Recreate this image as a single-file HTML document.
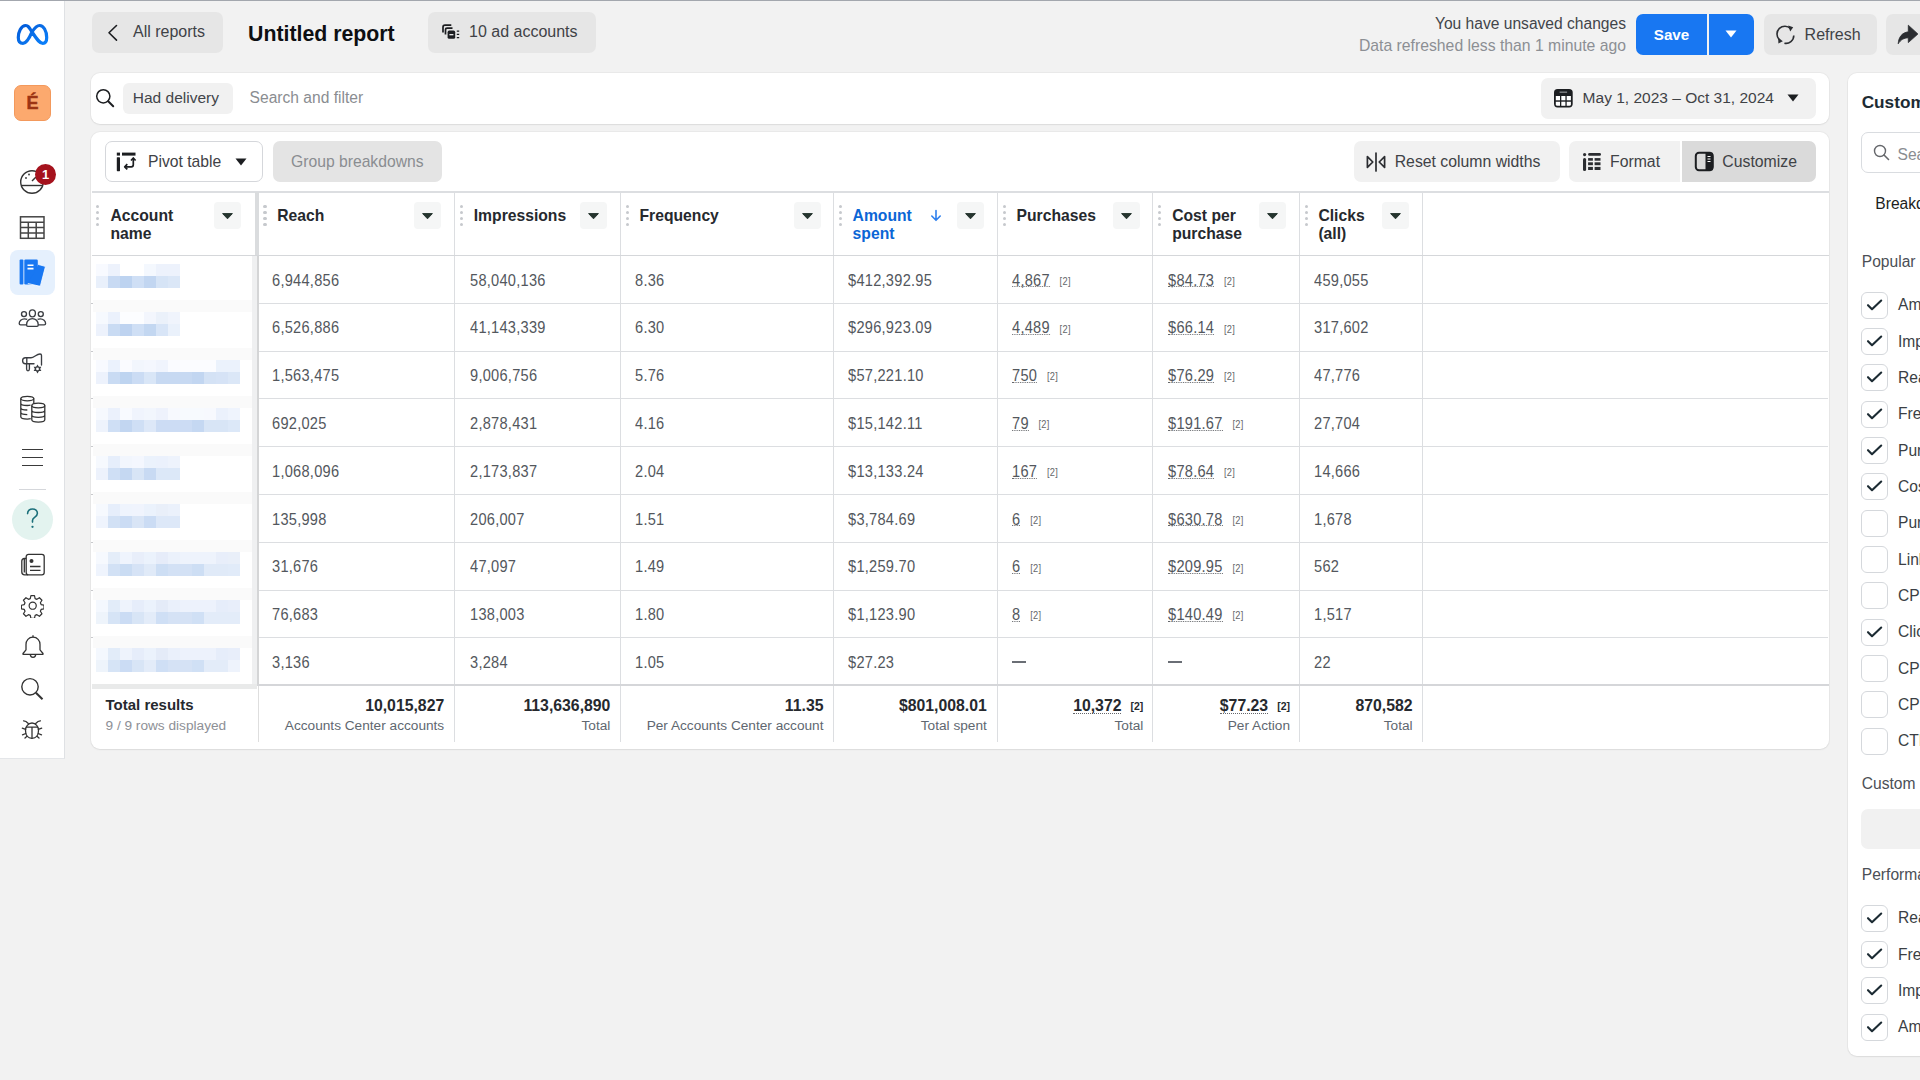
<!DOCTYPE html>
<html><head><meta charset="utf-8"><title>Untitled report</title>
<style>
html,body{margin:0;padding:0;}
body{width:1920px;height:1080px;overflow:hidden;position:relative;background:#f2f2f2;font-family:"Liberation Sans", sans-serif;}
.t{position:absolute;white-space:nowrap;line-height:1;}
.r{position:absolute;box-sizing:border-box;}
</style></head><body>
<div class="r" style="left:0px;top:0px;width:1920px;height:1px;background:#a3a7ae"></div>
<div class="r" style="left:0px;top:1px;width:65px;height:758px;background:#fff;border-right:1px solid #dfe1e4;border-bottom:1px solid #e4e6e9"></div>
<svg class="r" style="left:10px;top:15px;" width="46" height="40" viewBox="10 15 46 40" fill="none"><defs><linearGradient id="mg" x1="0" y1="0" x2="1" y2="1"><stop offset="0" stop-color="#0059d9"/><stop offset="0.5" stop-color="#0a6fe8"/><stop offset="1" stop-color="#0a80fb"/></linearGradient></defs>
<path d="M32 32C29 27 28 25.5 25.8 25.5 21 25.5 18.3 32 18.3 37.5 18.3 41.5 20.3 43.4 23 43.4 26 43.4 28.5 40 32 32 35.5 26.5 37.5 25.5 39.6 25.5 43.5 25.5 46.7 31 46.7 37.5 46.7 41.3 45 43.4 42.8 43.4 40 43.4 38 41 32 32z" stroke="url(#mg)" stroke-width="3.2" stroke-linejoin="round"/></svg>
<div class="r" style="left:14px;top:85px;width:37px;height:36px;background:#fca96e;border:1px solid #f3995c;border-radius:7px"></div>
<div class="t" style="left:14px;width:37px;text-align:center;top:93.6px;font-size:18px;font-weight:700;color:#9c3513;-webkit-text-stroke:0.5px #9c3513">É</div>
<svg class="r" style="left:19px;top:168px;" width="28" height="28" viewBox="0 0 28 28" fill="none"><circle cx="13" cy="14" r="11.3" stroke="#333" stroke-width="1.4"/>
<path d="M2.2 17.5h21.6" stroke="#333" stroke-width="1.4"/>
<circle cx="7" cy="10" r="0.9" fill="#333"/><circle cx="10" cy="6.5" r="0.9" fill="#333"/><path d="M13 13l4-4" stroke="#333" stroke-width="1.4"/></svg>
<div class="r" style="left:35px;top:164px;width:21px;height:21px;background:#a5121d;border-radius:50%;border:0"></div>
<div class="t" style="left:35px;width:21px;text-align:center;top:167.5px;font-size:13px;font-weight:700;color:#fff">1</div>
<svg class="r" style="left:19px;top:215px;" width="27" height="26" viewBox="0 0 27 26" fill="none"><rect x="1.5" y="1.8" width="23.5" height="21.5" stroke="#444" stroke-width="1.5"/>
<path d="M1.5 7.2h23.5M1.5 12.6h23.5M1.5 18h23.5M9.3 7.2v16M17.2 7.2v16" stroke="#444" stroke-width="1.5"/></svg>
<div class="r" style="left:10px;top:250px;width:45px;height:45px;background:#e5f0fd;border-radius:8px"></div>
<svg class="r" style="left:17px;top:257px;" width="32" height="32" viewBox="0 0 32 32" fill="none"><rect x="2.6" y="2.5" width="3.8" height="25" rx="1" fill="#1877f2"/>
<rect x="7.3" y="2.5" width="13.5" height="25" rx="1.2" fill="#1877f2"/>
<path d="M21.5 7.5l5.8 1.6c.7.2 1 .8.9 1.5l-4.6 17.6c-.2.7-.8 1-1.5.9L10.8 26.5" fill="#1877f2" stroke="#fff" stroke-width="0.8"/>
<path d="M10.5 8.2h6M10.5 11.6h6" stroke="#fff" stroke-width="1.6"/></svg>
<svg class="r" style="left:16px;top:300px;" width="34" height="80" viewBox="16 300 34 80" fill="none"><g stroke="#3a3d42" stroke-width="1.35" stroke-linejoin="round">
<circle cx="24" cy="314.1" r="2.5"/><ellipse cx="32.4" cy="313.3" rx="3" ry="3.5"/><circle cx="40.8" cy="314.1" r="2.5"/>
<path d="M27.2 319.4c-.8-.4-1.7-.6-2.7-.6-3 0-5.3 2.2-5.3 4.6 0 .8.6 1.4 1.4 1.4h6.2"/>
<path d="M37.6 319.4c.8-.4 1.7-.6 2.7-.6 3 0 5.3 2.2 5.3 4.6 0 .8-.6 1.4-1.4 1.4h-6.2"/>
<path d="M32.4 318.6c-3.3 0-5.8 2.6-5.8 5.9v.6c0 .7.6 1.2 1.2 1.2h9.2c.7 0 1.2-.5 1.2-1.2v-.6c0-3.3-2.5-5.9-5.8-5.9z" fill="#fff"/></g></svg>
<svg class="r" style="left:16px;top:340px;" width="34" height="40" viewBox="16 340 34 40" fill="none"><g stroke="#3a3d42" stroke-width="1.35" stroke-linejoin="round" stroke-linecap="round">
<path d="M25.5 357.7C23.6 357.7 22.6 359 22.6 360.7S23.6 363.7 25.5 363.7H34M25.5 357.7H31C34 357.7 36.5 354 40 354 41 354 41.5 354.7 41.5 355.6V365"/>
<path d="M26.8 357.7V363.7M26.6 363.7V369C26.6 370.3 27.3 370.8 28 370.8S29.4 370.3 29.4 369V363.7"/></g>
<path d="M37.5 364.4L41.4 371.1H33.6z" fill="#3a3d42"/><path d="M37.5 373.4L41.4 366.7H33.6z" fill="#3a3d42"/><circle cx="37.5" cy="368.9" r="1.4" fill="#fff"/></svg>
<svg class="r" style="left:19px;top:395px;" width="28" height="28" viewBox="0 0 28 28" fill="none"><g stroke="#333" stroke-width="1.3"><ellipse cx="8.3" cy="3.6" rx="6.5" ry="2.3"/>
<path d="M1.8 3.6v18.2c0 1.3 2.9 2.3 6.5 2.3 1.3 0 2.5-.1 3.4-.4M14.8 3.6v5.6M1.8 8.2c0 1.3 2.9 2.3 6.5 2.3 1.2 0 2.3-.1 3.2-.3M1.8 12.7c0 1.3 2.9 2.3 6.5 2.3M1.8 17.3c0 1.3 2.9 2.3 6.5 2.3"/>
<ellipse cx="19.3" cy="10.5" rx="6.5" ry="2.3" fill="#fff"/>
<path d="M12.8 10.5v14.3c0 1.3 2.9 2.3 6.5 2.3s6.5-1 6.5-2.3V10.5M12.8 15.2c0 1.3 2.9 2.3 6.5 2.3s6.5-1 6.5-2.3M12.8 20c0 1.3 2.9 2.3 6.5 2.3s6.5-1 6.5-2.3"/></g></svg>
<div class="r" style="left:22px;top:449px;width:21px;height:1.3px;background:#3a3a3a"></div>
<div class="r" style="left:22px;top:457px;width:21px;height:1.3px;background:#3a3a3a"></div>
<div class="r" style="left:22px;top:465px;width:21px;height:1.3px;background:#3a3a3a"></div>
<div class="r" style="left:19px;top:489px;width:27px;height:1px;background:#d5d7db"></div>
<div class="r" style="left:12px;top:499px;width:41px;height:41px;background:#e3f3ef;border-radius:50%"></div>
<svg class="r" style="left:20px;top:505px;" width="25" height="28" viewBox="0 0 25 28" fill="none"><path d="M7.6 8.6c0-2.9 2.2-4.6 4.9-4.6 2.8 0 4.9 1.8 4.9 4.3 0 2.2-1.4 3.2-2.8 4.1-1.3.8-2.1 1.5-2.1 3.1v1.6" stroke="#1b6f7a" stroke-width="1.6" stroke-linecap="round"/><circle cx="12.5" cy="21.8" r="1.15" fill="#1b6f7a"/></svg>
<svg class="r" style="left:20px;top:552px;" width="26" height="25" viewBox="0 0 26 25" fill="none"><g stroke="#333" stroke-width="1.3" stroke-linejoin="round"><rect x="6.2" y="2.3" width="18" height="20.5" rx="2.3"/>
<path d="M6.2 6.5H4.3c-1.5 0-2.5 1-2.5 2.5v11c0 1.6 1.2 2.8 2.8 2.8h3.5M4.3 6.5v14"/>
<path d="M10 14.5h10.5M10 18.3h10.5"/></g><circle cx="11.5" cy="9" r="2" fill="#333"/></svg>
<svg class="r" style="left:20.8px;top:594.3px;" width="23.4" height="23.4" viewBox="0 0 25 25" fill="none"><path d="M10.6 1.8h3.8l.7 3.1 1.9.8 2.7-1.7 2.7 2.7-1.7 2.7.8 1.9 3.1.7v3.8l-3.1.7-.8 1.9 1.7 2.7-2.7 2.7-2.7-1.7-1.9.8-.7 3.1h-3.8l-.7-3.1-1.9-.8-2.7 1.7-2.7-2.7 1.7-2.7-.8-1.9-3.1-.7v-3.8l3.1-.7.8-1.9-1.7-2.7 2.7-2.7 2.7 1.7 1.9-.8z" stroke="#333" stroke-width="1.3" stroke-linejoin="round"/>
<circle cx="12.5" cy="12.5" r="3.8" stroke="#333" stroke-width="1.3"/></svg>
<svg class="r" style="left:21px;top:634px;" width="24" height="26" viewBox="0 0 24 26" fill="none"><path d="M12 3.2c-4.3 0-7 3.3-7 7.3v5.3L2 19.5v.8h20v-.8l-3-3.7v-5.3c0-4-2.7-7.3-7-7.3z" stroke="#333" stroke-width="1.3" stroke-linejoin="round"/>
<path d="M12 1.3v1.9M9.3 20.3c0 1.7 1.2 3 2.7 3s2.7-1.3 2.7-3" stroke="#333" stroke-width="1.3"/></svg>
<svg class="r" style="left:20px;top:677px;" width="25" height="24" viewBox="0 0 25 24" fill="none"><circle cx="10" cy="9.8" r="8.2" stroke="#333" stroke-width="1.4"/><path d="M15.9 15.7l6.6 6.6" stroke="#333" stroke-width="2"/></svg>
<svg class="r" style="left:20px;top:716px;" width="24" height="24" viewBox="0 0 24 24" fill="none"><g stroke="#333" stroke-width="1.3" stroke-linecap="round"><path d="M12 22.3c-4.2 0-6.5-3.3-6.5-7.8 0-3.8 2.6-7.5 6.5-7.5s6.5 3.7 6.5 7.5c0 4.5-2.3 7.8-6.5 7.8z"/>
<path d="M6.2 11.2h11.6M12 11.2v11M8.3 7.6L6 5.5 3.6 4.8M15.7 7.6L18 5.5l2.4-.7M5.6 13.3L2.3 12.1M18.4 13.3l3.3-1.2M5.8 17.5l-3.3 1.3M18.2 17.5l3.3 1.3M7 20.3L5 22M17 20.3l2 1.7"/></g></svg>
<div class="r" style="left:92px;top:12px;width:131px;height:41px;background:#e6e6e6;border-radius:7px"></div>
<svg class="r" style="left:106px;top:24px;" width="14" height="18" viewBox="0 0 14 18" fill="none"><path d="M10.5 1.5L3 8.8l7.5 7.3" stroke="#1c1e21" stroke-width="1.6" stroke-linecap="round" stroke-linejoin="round"/></svg>
<div class="t" style="left:133.00px;top:23.90px;font-size:16px;font-weight:400;color:#3f4246;">All reports</div>
<div class="t" style="left:248.00px;top:23.34px;font-size:22.3px;font-weight:700;color:#0d0f12;transform:scaleX(0.955);transform-origin:0 0">Untitled report</div>
<div class="r" style="left:428px;top:12px;width:168px;height:41px;background:#e6e6e6;border-radius:7px"></div>
<svg class="r" style="left:440px;top:23px;" width="22" height="18" viewBox="0 0 22 18" fill="none"><path d="M3 9.5V4.2C3 3 3.9 2.2 5 2.2h6.3" stroke="#1c1e21" stroke-width="1.7"/>
<path d="M5.5 11.5V6.8c0-.9.7-1.6 1.6-1.6h5.4" stroke="#1c1e21" stroke-width="1.7"/>
<rect x="7.6" y="7.6" width="7.6" height="8.2" rx="1.6" fill="#1c1e21"/><path d="M9.4 11.7h4" stroke="#fff" stroke-width="1.2"/>
<path d="M16.8 8.2h2.4M16.8 11.4h2.4M16.8 14.6h2.4" stroke="#1c1e21" stroke-width="1.3"/></svg>
<div class="t" style="left:469.00px;top:23.90px;font-size:16px;font-weight:400;color:#3f4246;">10 ad accounts</div>
<div class="t" style="right:294.00px;top:15.54px;font-size:15.6px;font-weight:400;color:#42454a;">You have unsaved changes</div>
<div class="t" style="right:294.00px;top:38.11px;font-size:15.75px;font-weight:400;color:#8c8f94;">Data refreshed less than 1 minute ago</div>
<div class="r" style="left:1636px;top:14px;width:71px;height:41px;background:#1877f2;border-radius:7px 0 0 7px"></div>
<div class="t" style="left:1671.50px;top:27.38px;font-size:15.2px;font-weight:700;color:#fff;transform:translateX(-50%)">Save</div>
<div class="r" style="left:1709px;top:14px;width:45px;height:41px;background:#1877f2;border-radius:0 7px 7px 0"></div>
<svg class="r" style="left:1724px;top:29px;" width="14" height="10" viewBox="0 0 14 10" fill="none"><path d="M1.5 1.5h11L7 8.5z" fill="#fff"/></svg>
<div class="r" style="left:1764px;top:14px;width:113px;height:41px;background:#e6e6e6;border-radius:7px"></div>
<svg class="r" style="left:1775px;top:24px;" width="22" height="22" viewBox="0 0 22 22" fill="none"><path d="M15.6 4.6A7.8 7.8 0 0 0 4.2 15.6" stroke="#2b2d31" stroke-width="1.6" fill="none"/><path d="M18.8 11.6A7.8 7.8 0 0 1 9.4 19.2" stroke="#2b2d31" stroke-width="1.6" fill="none"/>
<path d="M13.2 1.6l5 1.6-3 4.4z" fill="#2b2d31"/><path d="M3.2 13.6l4.6 3.6-4.4 2.4z" fill="#2b2d31"/></svg>
<div class="t" style="left:1804.60px;top:27.20px;font-size:16px;font-weight:400;color:#3f4246;">Refresh</div>
<div class="r" style="left:1886px;top:14px;width:60px;height:41px;background:#e6e6e6;border-radius:7px"></div>
<svg class="r" style="left:1896px;top:24px;" width="24" height="22" viewBox="0 0 24 22" fill="none"><path d="M12.3 1.2l9.6 8.8-9.6 8.6v-4.8c-4.4.2-7.5 1.9-10.1 6 .4-6.8 3.9-11.2 10.1-12z" fill="#2b2d31" stroke="#2b2d31" stroke-width="0.8" stroke-linejoin="round"/></svg>
<div class="r" style="left:91px;top:73px;width:1738px;height:51px;background:#fff;border-radius:9px;box-shadow:0 0 0 1px rgba(0,0,0,0.035),0 1px 2px rgba(0,0,0,0.06)"></div>
<svg class="r" style="left:95px;top:88px;" width="20" height="20" viewBox="0 0 20 20" fill="none"><circle cx="8.3" cy="8.3" r="6.6" stroke="#1c1e21" stroke-width="1.5"/><path d="M13.2 13.2l5 5" stroke="#1c1e21" stroke-width="2" stroke-linecap="round"/></svg>
<div class="r" style="left:123px;top:83px;width:110px;height:31px;background:#f1f1f1;border-radius:6px"></div>
<div class="t" style="left:132.80px;top:90.42px;font-size:15.5px;font-weight:400;color:#42454a;">Had delivery</div>
<div class="t" style="left:249.60px;top:90.34px;font-size:15.6px;font-weight:400;color:#8a8d91;">Search and filter</div>
<div class="r" style="left:1541px;top:78px;width:275px;height:41px;background:#f1f1f1;border-radius:7px"></div>
<svg class="r" style="left:1554.3px;top:88.9px;" width="19" height="19" viewBox="0 0 19 19" fill="none"><rect x="0" y="0" width="18.7" height="18.4" rx="3.6" fill="#1c1e21"/><rect x="5.6" y="2.6" width="7.5" height="1.1" fill="#9a9ca0"/>
<g fill="#fff"><rect x="1.8" y="7" width="4.2" height="4.3"/><rect x="7.3" y="7" width="4.1" height="4.3"/><rect x="12.7" y="7" width="4.2" height="4.3"/>
<path d="M1.8 12.7H6v4.1H3.3a1.5 1.5 0 0 1-1.5-1.5z"/><rect x="7.3" y="12.7" width="4.1" height="4.1"/><path d="M12.7 12.7h4.2v2.6a1.5 1.5 0 0 1-1.5 1.5h-2.7z"/></g></svg>
<div class="t" style="left:1582.60px;top:90.42px;font-size:15.5px;font-weight:400;color:#3f4246;">May 1, 2023 – Oct 31, 2024</div>
<svg class="r" style="left:1786px;top:93px;" width="14" height="10" viewBox="0 0 14 10" fill="none"><path d="M1.5 1.5h11L7 8.5z" fill="#1c1e21"/></svg>
<div class="r" style="left:91px;top:132px;width:1738px;height:617px;background:#fff;border-radius:9px;box-shadow:0 0 0 1px rgba(0,0,0,0.035),0 1px 2px rgba(0,0,0,0.06)"></div>
<div class="r" style="left:105px;top:141px;width:158px;height:41px;background:#fff;border:1px solid #d5d7db;border-radius:7px"></div>
<svg class="r" style="left:115px;top:151px;" width="22" height="22" viewBox="0 0 22 22" fill="none"><rect x="1.8" y="6.2" width="3.2" height="14" rx=".6" fill="#1c1e21"/><rect x="1.8" y="1.6" width="3.2" height="3" fill="#1c1e21"/>
<rect x="7" y="1.6" width="13.5" height="3" fill="#1c1e21"/>
<path d="M18.3 7.5v6.3c0 1.2-.8 2-2 2H10" stroke="#1c1e21" stroke-width="1.7"/><path d="M16 9.5l2.3-2.5 2.3 2.5M12.3 13.2l-2.6 2.6 2.6 2.6" stroke="#1c1e21" stroke-width="1.7" stroke-linejoin="round"/></svg>
<div class="t" style="left:148.00px;top:154.46px;font-size:15.7px;font-weight:400;color:#3f4246;">Pivot table</div>
<svg class="r" style="left:234px;top:157px;" width="14" height="10" viewBox="0 0 14 10" fill="none"><path d="M1.5 1.5h11L7 8.5z" fill="#1c1e21"/></svg>
<div class="r" style="left:273px;top:141px;width:169px;height:41px;background:#e4e4e4;border-radius:7px"></div>
<div class="t" style="left:291.00px;top:154.46px;font-size:15.7px;font-weight:400;color:#8a8d91;">Group breakdowns</div>
<div class="r" style="left:1354px;top:141px;width:206px;height:41px;background:#f1f1f1;border-radius:7px"></div>
<svg class="r" style="left:1365px;top:152px;" width="22" height="20" viewBox="0 0 22 20" fill="none"><path d="M2.4 4.6l5.4 5.4-5.4 5.4z" stroke="#2b2d31" stroke-width="1.7" stroke-linejoin="round"/><path d="M19.6 4.6l-5.4 5.4 5.4 5.4z" stroke="#2b2d31" stroke-width="1.7" stroke-linejoin="round"/><path d="M11 1v18" stroke="#2b2d31" stroke-width="1.7" stroke-linecap="round"/></svg>
<div class="t" style="left:1394.70px;top:154.37px;font-size:15.8px;font-weight:400;color:#3f4246;">Reset column widths</div>
<div class="r" style="left:1569px;top:141px;width:111px;height:41px;background:#f1f1f1;border-radius:7px 0 0 7px"></div>
<svg class="r" style="left:1582.8px;top:152.8px;" width="18" height="18" viewBox="0 0 18 18" fill="none"><g fill="#2b2d31"><circle cx="1.6" cy="1.6" r="1.6"/><rect x="5.1" y="0" width="12.9" height="2.8" rx="1.4"/><rect x="0" y="5.1" width="3.1" height="12.9" rx="1.5"/>
<rect x="5.1" y="5.1" width="4.8" height="2.6"/><rect x="11.6" y="5.1" width="5.9" height="2.6"/><rect x="5.1" y="9.3" width="4.8" height="2.9"/><rect x="11.6" y="9.3" width="5.9" height="2.9"/><rect x="5.1" y="13.9" width="4.8" height="3.1"/><rect x="11.6" y="13.9" width="5.9" height="3.1"/></g></svg>
<div class="t" style="left:1610.00px;top:154.37px;font-size:15.8px;font-weight:400;color:#3f4246;">Format</div>
<div class="r" style="left:1682px;top:141px;width:134px;height:41px;background:#dadada;border-radius:0 7px 7px 0"></div>
<svg class="r" style="left:1694px;top:151px;" width="21" height="21" viewBox="0 0 21 21" fill="none"><rect x="1.8" y="1.8" width="17" height="17.4" rx="3.2" stroke="#1c1e21" stroke-width="2"/><rect x="11.5" y="1.8" width="7.3" height="17.4" fill="#1c1e21"/><path d="M13.5 5.5h3M13.5 8h3M13.5 10.5h3" stroke="#fff" stroke-width="1"/></svg>
<div class="t" style="left:1722.30px;top:154.37px;font-size:15.8px;font-weight:400;color:#3f4246;">Customize</div>
<div class="r" style="left:92px;top:191px;width:1737px;height:2px;background:#dcdee1"></div>
<div class="r" style="left:255px;top:192px;width:4px;height:64px;background:#dadcde"></div>
<div class="r" style="left:252px;top:256px;width:5px;height:429px;background:#eff0f1"></div>
<div class="r" style="left:257px;top:256px;width:2px;height:429px;background:#d4d5d6"></div>
<div class="r" style="left:454px;top:192px;width:1px;height:550px;background:#dcdee1"></div>
<div class="r" style="left:620px;top:192px;width:1px;height:550px;background:#dcdee1"></div>
<div class="r" style="left:833px;top:192px;width:1px;height:550px;background:#dcdee1"></div>
<div class="r" style="left:997px;top:192px;width:1px;height:550px;background:#dcdee1"></div>
<div class="r" style="left:1152px;top:192px;width:1px;height:550px;background:#dcdee1"></div>
<div class="r" style="left:1299px;top:192px;width:1px;height:550px;background:#dcdee1"></div>
<div class="r" style="left:1422px;top:192px;width:1px;height:550px;background:#dcdee1"></div>
<div class="r" style="left:258px;top:686px;width:1px;height:56px;background:#dedede"></div>
<div class="r" style="left:92px;top:255px;width:1737px;height:1px;background:#d5d7da"></div>
<div class="r" style="left:259px;top:302.8px;width:1569px;height:1px;background:#dcdee1"></div>
<div class="r" style="left:91px;top:302.8px;width:2px;height:1px;background:#c8c9cc"></div>
<div class="r" style="left:259px;top:350.6px;width:1569px;height:1px;background:#dcdee1"></div>
<div class="r" style="left:91px;top:350.6px;width:2px;height:1px;background:#c8c9cc"></div>
<div class="r" style="left:259px;top:398.4px;width:1569px;height:1px;background:#dcdee1"></div>
<div class="r" style="left:91px;top:398.4px;width:2px;height:1px;background:#c8c9cc"></div>
<div class="r" style="left:259px;top:446.2px;width:1569px;height:1px;background:#dcdee1"></div>
<div class="r" style="left:91px;top:446.2px;width:2px;height:1px;background:#c8c9cc"></div>
<div class="r" style="left:259px;top:494.0px;width:1569px;height:1px;background:#dcdee1"></div>
<div class="r" style="left:91px;top:494.0px;width:2px;height:1px;background:#c8c9cc"></div>
<div class="r" style="left:259px;top:541.8px;width:1569px;height:1px;background:#dcdee1"></div>
<div class="r" style="left:91px;top:541.8px;width:2px;height:1px;background:#c8c9cc"></div>
<div class="r" style="left:259px;top:589.6px;width:1569px;height:1px;background:#dcdee1"></div>
<div class="r" style="left:91px;top:589.6px;width:2px;height:1px;background:#c8c9cc"></div>
<div class="r" style="left:259px;top:637.4px;width:1569px;height:1px;background:#dcdee1"></div>
<div class="r" style="left:91px;top:637.4px;width:2px;height:1px;background:#c8c9cc"></div>
<div class="r" style="left:257px;top:684px;width:1572px;height:2px;background:#d5d6d9"></div>
<div class="r" style="left:96.2px;top:205.2px;width:3.2px;height:3.2px;background:#c6c9cd;border-radius:50%"></div>
<div class="r" style="left:96.2px;top:211.2px;width:3.2px;height:3.2px;background:#c6c9cd;border-radius:50%"></div>
<div class="r" style="left:96.2px;top:217.2px;width:3.2px;height:3.2px;background:#c6c9cd;border-radius:50%"></div>
<div class="r" style="left:96.2px;top:223.2px;width:3.2px;height:3.2px;background:#c6c9cd;border-radius:50%"></div>
<div class="t" style="left:110.50px;top:208.26px;font-size:15.7px;font-weight:700;color:#26292e;">Account</div>
<div class="t" style="left:110.50px;top:225.96px;font-size:15.7px;font-weight:700;color:#26292e;">name</div>
<div class="r" style="left:214px;top:201.5px;width:27px;height:27px;background:#f5f6f6;border-radius:4px"></div>
<svg class="r" style="left:221px;top:211.5px;" width="13" height="9" viewBox="0 0 13 9" fill="none"><path d="M1.6 1.6h9.8L6.5 6.8z" fill="#26352f" stroke="#26352f" stroke-width="1" stroke-linejoin="round"/></svg>
<div class="r" style="left:263.4px;top:205.2px;width:3.2px;height:3.2px;background:#c6c9cd;border-radius:50%"></div>
<div class="r" style="left:263.4px;top:211.2px;width:3.2px;height:3.2px;background:#c6c9cd;border-radius:50%"></div>
<div class="r" style="left:263.4px;top:217.2px;width:3.2px;height:3.2px;background:#c6c9cd;border-radius:50%"></div>
<div class="r" style="left:263.4px;top:223.2px;width:3.2px;height:3.2px;background:#c6c9cd;border-radius:50%"></div>
<div class="t" style="left:277.20px;top:208.26px;font-size:15.7px;font-weight:700;color:#26292e;">Reach</div>
<div class="r" style="left:414.2px;top:201.5px;width:27px;height:27px;background:#f5f6f6;border-radius:4px"></div>
<svg class="r" style="left:421.2px;top:211.5px;" width="13" height="9" viewBox="0 0 13 9" fill="none"><path d="M1.6 1.6h9.8L6.5 6.8z" fill="#26352f" stroke="#26352f" stroke-width="1" stroke-linejoin="round"/></svg>
<div class="r" style="left:459.7px;top:205.2px;width:3.2px;height:3.2px;background:#c6c9cd;border-radius:50%"></div>
<div class="r" style="left:459.7px;top:211.2px;width:3.2px;height:3.2px;background:#c6c9cd;border-radius:50%"></div>
<div class="r" style="left:459.7px;top:217.2px;width:3.2px;height:3.2px;background:#c6c9cd;border-radius:50%"></div>
<div class="r" style="left:459.7px;top:223.2px;width:3.2px;height:3.2px;background:#c6c9cd;border-radius:50%"></div>
<div class="t" style="left:473.75px;top:208.26px;font-size:15.7px;font-weight:700;color:#26292e;">Impressions</div>
<div class="r" style="left:580px;top:201.5px;width:27px;height:27px;background:#f5f6f6;border-radius:4px"></div>
<svg class="r" style="left:587px;top:211.5px;" width="13" height="9" viewBox="0 0 13 9" fill="none"><path d="M1.6 1.6h9.8L6.5 6.8z" fill="#26352f" stroke="#26352f" stroke-width="1" stroke-linejoin="round"/></svg>
<div class="r" style="left:625.7px;top:205.2px;width:3.2px;height:3.2px;background:#c6c9cd;border-radius:50%"></div>
<div class="r" style="left:625.7px;top:211.2px;width:3.2px;height:3.2px;background:#c6c9cd;border-radius:50%"></div>
<div class="r" style="left:625.7px;top:217.2px;width:3.2px;height:3.2px;background:#c6c9cd;border-radius:50%"></div>
<div class="r" style="left:625.7px;top:223.2px;width:3.2px;height:3.2px;background:#c6c9cd;border-radius:50%"></div>
<div class="t" style="left:639.50px;top:208.26px;font-size:15.7px;font-weight:700;color:#26292e;">Frequency</div>
<div class="r" style="left:793.5px;top:201.5px;width:27px;height:27px;background:#f5f6f6;border-radius:4px"></div>
<svg class="r" style="left:800.5px;top:211.5px;" width="13" height="9" viewBox="0 0 13 9" fill="none"><path d="M1.6 1.6h9.8L6.5 6.8z" fill="#26352f" stroke="#26352f" stroke-width="1" stroke-linejoin="round"/></svg>
<div class="r" style="left:839.1px;top:205.2px;width:3.2px;height:3.2px;background:#c6c9cd;border-radius:50%"></div>
<div class="r" style="left:839.1px;top:211.2px;width:3.2px;height:3.2px;background:#c6c9cd;border-radius:50%"></div>
<div class="r" style="left:839.1px;top:217.2px;width:3.2px;height:3.2px;background:#c6c9cd;border-radius:50%"></div>
<div class="r" style="left:839.1px;top:223.2px;width:3.2px;height:3.2px;background:#c6c9cd;border-radius:50%"></div>
<div class="t" style="left:852.60px;top:208.26px;font-size:15.7px;font-weight:700;color:#0b66d6;">Amount</div>
<div class="t" style="left:852.60px;top:225.96px;font-size:15.7px;font-weight:700;color:#0b66d6;">spent</div>
<div class="r" style="left:956.7px;top:201.5px;width:27px;height:27px;background:#f5f6f6;border-radius:4px"></div>
<svg class="r" style="left:963.7px;top:211.5px;" width="13" height="9" viewBox="0 0 13 9" fill="none"><path d="M1.6 1.6h9.8L6.5 6.8z" fill="#26352f" stroke="#26352f" stroke-width="1" stroke-linejoin="round"/></svg>
<div class="r" style="left:1002.7px;top:205.2px;width:3.2px;height:3.2px;background:#c6c9cd;border-radius:50%"></div>
<div class="r" style="left:1002.7px;top:211.2px;width:3.2px;height:3.2px;background:#c6c9cd;border-radius:50%"></div>
<div class="r" style="left:1002.7px;top:217.2px;width:3.2px;height:3.2px;background:#c6c9cd;border-radius:50%"></div>
<div class="r" style="left:1002.7px;top:223.2px;width:3.2px;height:3.2px;background:#c6c9cd;border-radius:50%"></div>
<div class="t" style="left:1016.50px;top:208.26px;font-size:15.7px;font-weight:700;color:#26292e;">Purchases</div>
<div class="r" style="left:1112.7px;top:201.5px;width:27px;height:27px;background:#f5f6f6;border-radius:4px"></div>
<svg class="r" style="left:1119.7px;top:211.5px;" width="13" height="9" viewBox="0 0 13 9" fill="none"><path d="M1.6 1.6h9.8L6.5 6.8z" fill="#26352f" stroke="#26352f" stroke-width="1" stroke-linejoin="round"/></svg>
<div class="r" style="left:1158.0px;top:205.2px;width:3.2px;height:3.2px;background:#c6c9cd;border-radius:50%"></div>
<div class="r" style="left:1158.0px;top:211.2px;width:3.2px;height:3.2px;background:#c6c9cd;border-radius:50%"></div>
<div class="r" style="left:1158.0px;top:217.2px;width:3.2px;height:3.2px;background:#c6c9cd;border-radius:50%"></div>
<div class="r" style="left:1158.0px;top:223.2px;width:3.2px;height:3.2px;background:#c6c9cd;border-radius:50%"></div>
<div class="t" style="left:1172.20px;top:208.26px;font-size:15.7px;font-weight:700;color:#26292e;">Cost per</div>
<div class="t" style="left:1172.20px;top:225.96px;font-size:15.7px;font-weight:700;color:#26292e;">purchase</div>
<div class="r" style="left:1259.3px;top:201.5px;width:27px;height:27px;background:#f5f6f6;border-radius:4px"></div>
<svg class="r" style="left:1266.3px;top:211.5px;" width="13" height="9" viewBox="0 0 13 9" fill="none"><path d="M1.6 1.6h9.8L6.5 6.8z" fill="#26352f" stroke="#26352f" stroke-width="1" stroke-linejoin="round"/></svg>
<div class="r" style="left:1304.6px;top:205.2px;width:3.2px;height:3.2px;background:#c6c9cd;border-radius:50%"></div>
<div class="r" style="left:1304.6px;top:211.2px;width:3.2px;height:3.2px;background:#c6c9cd;border-radius:50%"></div>
<div class="r" style="left:1304.6px;top:217.2px;width:3.2px;height:3.2px;background:#c6c9cd;border-radius:50%"></div>
<div class="r" style="left:1304.6px;top:223.2px;width:3.2px;height:3.2px;background:#c6c9cd;border-radius:50%"></div>
<div class="t" style="left:1318.40px;top:208.26px;font-size:15.7px;font-weight:700;color:#26292e;">Clicks</div>
<div class="t" style="left:1318.40px;top:225.96px;font-size:15.7px;font-weight:700;color:#26292e;">(all)</div>
<div class="r" style="left:1381.8px;top:201.5px;width:27px;height:27px;background:#f5f6f6;border-radius:4px"></div>
<svg class="r" style="left:1388.8px;top:211.5px;" width="13" height="9" viewBox="0 0 13 9" fill="none"><path d="M1.6 1.6h9.8L6.5 6.8z" fill="#26352f" stroke="#26352f" stroke-width="1" stroke-linejoin="round"/></svg>
<svg class="r" style="left:929px;top:207px;" width="14" height="16" viewBox="0 0 14 16" fill="none"><path d="M7 3.6v9.4M2.8 9l4.2 4.3L11.2 9" stroke="#2f80ed" stroke-width="1.6" stroke-linejoin="round" stroke-linecap="round"/></svg>
<div class="r" style="left:96px;top:264px;width:12px;height:12px;background:#f8faff"></div>
<div class="r" style="left:108px;top:264px;width:12px;height:12px;background:#edf2fc"></div>
<div class="r" style="left:144px;top:264px;width:12px;height:12px;background:#f4f8fe"></div>
<div class="r" style="left:156px;top:264px;width:12px;height:12px;background:#edf2fc"></div>
<div class="r" style="left:168px;top:264px;width:12px;height:12px;background:#edf2fc"></div>
<div class="r" style="left:96px;top:276px;width:12px;height:12px;background:#e9f0fb"></div>
<div class="r" style="left:108px;top:276px;width:12px;height:12px;background:#c8daf3"></div>
<div class="r" style="left:120px;top:276px;width:12px;height:12px;background:#bdd3f0"></div>
<div class="r" style="left:132px;top:276px;width:12px;height:12px;background:#cfdff5"></div>
<div class="r" style="left:144px;top:276px;width:12px;height:12px;background:#c2d6f1"></div>
<div class="r" style="left:156px;top:276px;width:12px;height:12px;background:#d6e4f6"></div>
<div class="r" style="left:168px;top:276px;width:12px;height:12px;background:#dbe7f7"></div>
<div class="r" style="left:93px;top:300px;width:159px;height:12px;background:#fafafa"></div>
<div class="r" style="left:96px;top:312px;width:12px;height:12px;background:#f6f9fe"></div>
<div class="r" style="left:108px;top:312px;width:12px;height:12px;background:#ebf1fc"></div>
<div class="r" style="left:120px;top:312px;width:12px;height:12px;background:#fcfdff"></div>
<div class="r" style="left:132px;top:312px;width:12px;height:12px;background:#fcfdff"></div>
<div class="r" style="left:144px;top:312px;width:12px;height:12px;background:#f3f6fd"></div>
<div class="r" style="left:156px;top:312px;width:12px;height:12px;background:#ebf1fa"></div>
<div class="r" style="left:168px;top:312px;width:12px;height:12px;background:#f0f4fc"></div>
<div class="r" style="left:96px;top:324px;width:12px;height:12px;background:#edf2fc"></div>
<div class="r" style="left:108px;top:324px;width:12px;height:12px;background:#c9dbf3"></div>
<div class="r" style="left:120px;top:324px;width:12px;height:12px;background:#bed3f0"></div>
<div class="r" style="left:132px;top:324px;width:12px;height:12px;background:#cfdff5"></div>
<div class="r" style="left:144px;top:324px;width:12px;height:12px;background:#c3d7f1"></div>
<div class="r" style="left:156px;top:324px;width:12px;height:12px;background:#d8e5f7"></div>
<div class="r" style="left:168px;top:324px;width:12px;height:12px;background:#eaf1fb"></div>
<div class="r" style="left:93px;top:348px;width:159px;height:12px;background:#fafafa"></div>
<div class="r" style="left:96px;top:360px;width:12px;height:12px;background:#f8faff"></div>
<div class="r" style="left:108px;top:360px;width:12px;height:12px;background:#ebf2fd"></div>
<div class="r" style="left:120px;top:360px;width:12px;height:12px;background:#fafbff"></div>
<div class="r" style="left:132px;top:360px;width:12px;height:12px;background:#f2f6fd"></div>
<div class="r" style="left:144px;top:360px;width:12px;height:12px;background:#f4f7fe"></div>
<div class="r" style="left:156px;top:360px;width:12px;height:12px;background:#f0f4fd"></div>
<div class="r" style="left:168px;top:360px;width:12px;height:12px;background:#fafbff"></div>
<div class="r" style="left:180px;top:360px;width:12px;height:12px;background:#fbfcff"></div>
<div class="r" style="left:192px;top:360px;width:12px;height:12px;background:#fbfcff"></div>
<div class="r" style="left:204px;top:360px;width:12px;height:12px;background:#fbfcff"></div>
<div class="r" style="left:216px;top:360px;width:12px;height:12px;background:#ebf2fc"></div>
<div class="r" style="left:228px;top:360px;width:12px;height:12px;background:#ebf2fc"></div>
<div class="r" style="left:96px;top:372px;width:12px;height:12px;background:#edf2fc"></div>
<div class="r" style="left:108px;top:372px;width:12px;height:12px;background:#c9dbf3"></div>
<div class="r" style="left:120px;top:372px;width:12px;height:12px;background:#bed4f0"></div>
<div class="r" style="left:132px;top:372px;width:12px;height:12px;background:#cbdcf4"></div>
<div class="r" style="left:144px;top:372px;width:12px;height:12px;background:#d9e6f7"></div>
<div class="r" style="left:156px;top:372px;width:12px;height:12px;background:#c7d9f2"></div>
<div class="r" style="left:168px;top:372px;width:12px;height:12px;background:#c7d9f2"></div>
<div class="r" style="left:180px;top:372px;width:12px;height:12px;background:#c7d9f2"></div>
<div class="r" style="left:192px;top:372px;width:12px;height:12px;background:#c2d6f1"></div>
<div class="r" style="left:204px;top:372px;width:12px;height:12px;background:#d4e2f5"></div>
<div class="r" style="left:216px;top:372px;width:12px;height:12px;background:#d6e3f6"></div>
<div class="r" style="left:228px;top:372px;width:12px;height:12px;background:#dbe7f7"></div>
<div class="r" style="left:93px;top:396px;width:159px;height:12px;background:#fafafa"></div>
<div class="r" style="left:96px;top:408px;width:12px;height:12px;background:#f6f9fe"></div>
<div class="r" style="left:108px;top:408px;width:12px;height:12px;background:#ebf1fc"></div>
<div class="r" style="left:120px;top:408px;width:12px;height:12px;background:#f8faff"></div>
<div class="r" style="left:132px;top:408px;width:12px;height:12px;background:#f0f4fd"></div>
<div class="r" style="left:144px;top:408px;width:12px;height:12px;background:#f2f6fd"></div>
<div class="r" style="left:156px;top:408px;width:12px;height:12px;background:#eef2fc"></div>
<div class="r" style="left:168px;top:408px;width:12px;height:12px;background:#f7f9fe"></div>
<div class="r" style="left:180px;top:408px;width:12px;height:12px;background:#f7fafe"></div>
<div class="r" style="left:192px;top:408px;width:12px;height:12px;background:#f7fafe"></div>
<div class="r" style="left:204px;top:408px;width:12px;height:12px;background:#f7f9fe"></div>
<div class="r" style="left:216px;top:408px;width:12px;height:12px;background:#ebf1fc"></div>
<div class="r" style="left:228px;top:408px;width:12px;height:12px;background:#eff4fd"></div>
<div class="r" style="left:96px;top:420px;width:12px;height:12px;background:#eef3fc"></div>
<div class="r" style="left:108px;top:420px;width:12px;height:12px;background:#cfdff5"></div>
<div class="r" style="left:120px;top:420px;width:12px;height:12px;background:#c2d6f1"></div>
<div class="r" style="left:132px;top:420px;width:12px;height:12px;background:#cfdff5"></div>
<div class="r" style="left:144px;top:420px;width:12px;height:12px;background:#dde8f8"></div>
<div class="r" style="left:156px;top:420px;width:12px;height:12px;background:#ccdcf4"></div>
<div class="r" style="left:168px;top:420px;width:12px;height:12px;background:#ccdcf4"></div>
<div class="r" style="left:180px;top:420px;width:12px;height:12px;background:#ccdcf4"></div>
<div class="r" style="left:192px;top:420px;width:12px;height:12px;background:#c5d8f2"></div>
<div class="r" style="left:204px;top:420px;width:12px;height:12px;background:#d8e5f6"></div>
<div class="r" style="left:216px;top:420px;width:12px;height:12px;background:#d8e5f6"></div>
<div class="r" style="left:228px;top:420px;width:12px;height:12px;background:#dce8f8"></div>
<div class="r" style="left:93px;top:444px;width:159px;height:12px;background:#fafafa"></div>
<div class="r" style="left:96px;top:456px;width:12px;height:12px;background:#f6f9fe"></div>
<div class="r" style="left:108px;top:456px;width:12px;height:12px;background:#e6eefb"></div>
<div class="r" style="left:120px;top:456px;width:12px;height:12px;background:#f2f6fd"></div>
<div class="r" style="left:132px;top:456px;width:12px;height:12px;background:#f4f7fe"></div>
<div class="r" style="left:144px;top:456px;width:12px;height:12px;background:#ebf2fc"></div>
<div class="r" style="left:156px;top:456px;width:12px;height:12px;background:#ebf1fc"></div>
<div class="r" style="left:168px;top:456px;width:12px;height:12px;background:#eef3fc"></div>
<div class="r" style="left:96px;top:468px;width:12px;height:12px;background:#edf2fc"></div>
<div class="r" style="left:108px;top:468px;width:12px;height:12px;background:#cfdff5"></div>
<div class="r" style="left:120px;top:468px;width:12px;height:12px;background:#c5d8f2"></div>
<div class="r" style="left:132px;top:468px;width:12px;height:12px;background:#d8e5f6"></div>
<div class="r" style="left:144px;top:468px;width:12px;height:12px;background:#c8daf3"></div>
<div class="r" style="left:156px;top:468px;width:12px;height:12px;background:#dce8f8"></div>
<div class="r" style="left:168px;top:468px;width:12px;height:12px;background:#dce8f8"></div>
<div class="r" style="left:93px;top:492px;width:159px;height:12px;background:#fafafa"></div>
<div class="r" style="left:96px;top:504px;width:12px;height:12px;background:#f6f9fe"></div>
<div class="r" style="left:108px;top:504px;width:12px;height:12px;background:#e6eefb"></div>
<div class="r" style="left:120px;top:504px;width:12px;height:12px;background:#eff4fd"></div>
<div class="r" style="left:132px;top:504px;width:12px;height:12px;background:#f0f4fd"></div>
<div class="r" style="left:144px;top:504px;width:12px;height:12px;background:#ebf2fc"></div>
<div class="r" style="left:156px;top:504px;width:12px;height:12px;background:#e9eff9"></div>
<div class="r" style="left:168px;top:504px;width:12px;height:12px;background:#ebf1fb"></div>
<div class="r" style="left:96px;top:516px;width:12px;height:12px;background:#eff4fd"></div>
<div class="r" style="left:108px;top:516px;width:12px;height:12px;background:#d2e1f5"></div>
<div class="r" style="left:120px;top:516px;width:12px;height:12px;background:#cbdcf4"></div>
<div class="r" style="left:132px;top:516px;width:12px;height:12px;background:#d9e5f6"></div>
<div class="r" style="left:144px;top:516px;width:12px;height:12px;background:#cbdcf4"></div>
<div class="r" style="left:156px;top:516px;width:12px;height:12px;background:#dde8f8"></div>
<div class="r" style="left:168px;top:516px;width:12px;height:12px;background:#dde8f8"></div>
<div class="r" style="left:93px;top:540px;width:159px;height:12px;background:#fafafa"></div>
<div class="r" style="left:96px;top:552px;width:12px;height:12px;background:#f6f9fe"></div>
<div class="r" style="left:108px;top:552px;width:12px;height:12px;background:#e4edf9"></div>
<div class="r" style="left:120px;top:552px;width:12px;height:12px;background:#eff4fd"></div>
<div class="r" style="left:132px;top:552px;width:12px;height:12px;background:#e8eefa"></div>
<div class="r" style="left:144px;top:552px;width:12px;height:12px;background:#ebf2fc"></div>
<div class="r" style="left:156px;top:552px;width:12px;height:12px;background:#e6ecf9"></div>
<div class="r" style="left:168px;top:552px;width:12px;height:12px;background:#ebf1fb"></div>
<div class="r" style="left:180px;top:552px;width:12px;height:12px;background:#eef3fc"></div>
<div class="r" style="left:192px;top:552px;width:12px;height:12px;background:#eef3fc"></div>
<div class="r" style="left:204px;top:552px;width:12px;height:12px;background:#eef3fc"></div>
<div class="r" style="left:216px;top:552px;width:12px;height:12px;background:#e8eefa"></div>
<div class="r" style="left:228px;top:552px;width:12px;height:12px;background:#e9eff9"></div>
<div class="r" style="left:96px;top:564px;width:12px;height:12px;background:#eff4fd"></div>
<div class="r" style="left:108px;top:564px;width:12px;height:12px;background:#d2e1f5"></div>
<div class="r" style="left:120px;top:564px;width:12px;height:12px;background:#cadcf3"></div>
<div class="r" style="left:132px;top:564px;width:12px;height:12px;background:#d6e3f6"></div>
<div class="r" style="left:144px;top:564px;width:12px;height:12px;background:#e0eaf8"></div>
<div class="r" style="left:156px;top:564px;width:12px;height:12px;background:#cddef4"></div>
<div class="r" style="left:168px;top:564px;width:12px;height:12px;background:#d3e1f5"></div>
<div class="r" style="left:180px;top:564px;width:12px;height:12px;background:#d3e1f5"></div>
<div class="r" style="left:192px;top:564px;width:12px;height:12px;background:#cddef4"></div>
<div class="r" style="left:204px;top:564px;width:12px;height:12px;background:#e0eaf8"></div>
<div class="r" style="left:216px;top:564px;width:12px;height:12px;background:#e0eaf8"></div>
<div class="r" style="left:228px;top:564px;width:12px;height:12px;background:#e1ebf9"></div>
<div class="r" style="left:93px;top:588px;width:159px;height:12px;background:#fafafa"></div>
<div class="r" style="left:96px;top:600px;width:12px;height:12px;background:#f4f8fe"></div>
<div class="r" style="left:108px;top:600px;width:12px;height:12px;background:#e2ecf9"></div>
<div class="r" style="left:120px;top:600px;width:12px;height:12px;background:#eef3fc"></div>
<div class="r" style="left:132px;top:600px;width:12px;height:12px;background:#e6edfa"></div>
<div class="r" style="left:144px;top:600px;width:12px;height:12px;background:#ebf2fc"></div>
<div class="r" style="left:156px;top:600px;width:12px;height:12px;background:#e4ebf8"></div>
<div class="r" style="left:168px;top:600px;width:12px;height:12px;background:#eaf0fb"></div>
<div class="r" style="left:180px;top:600px;width:12px;height:12px;background:#edf2fc"></div>
<div class="r" style="left:192px;top:600px;width:12px;height:12px;background:#edf2fc"></div>
<div class="r" style="left:204px;top:600px;width:12px;height:12px;background:#edf2fc"></div>
<div class="r" style="left:216px;top:600px;width:12px;height:12px;background:#e6edfa"></div>
<div class="r" style="left:228px;top:600px;width:12px;height:12px;background:#e8eefa"></div>
<div class="r" style="left:96px;top:612px;width:12px;height:12px;background:#eef4fb"></div>
<div class="r" style="left:108px;top:612px;width:12px;height:12px;background:#d6e4f6"></div>
<div class="r" style="left:120px;top:612px;width:12px;height:12px;background:#cbdcf4"></div>
<div class="r" style="left:132px;top:612px;width:12px;height:12px;background:#d8e5f6"></div>
<div class="r" style="left:144px;top:612px;width:12px;height:12px;background:#e3ecf9"></div>
<div class="r" style="left:156px;top:612px;width:12px;height:12px;background:#cfdff5"></div>
<div class="r" style="left:168px;top:612px;width:12px;height:12px;background:#d5e2f5"></div>
<div class="r" style="left:180px;top:612px;width:12px;height:12px;background:#d5e2f5"></div>
<div class="r" style="left:192px;top:612px;width:12px;height:12px;background:#d0e0f5"></div>
<div class="r" style="left:204px;top:612px;width:12px;height:12px;background:#e3ecf9"></div>
<div class="r" style="left:216px;top:612px;width:12px;height:12px;background:#e3ecf9"></div>
<div class="r" style="left:228px;top:612px;width:12px;height:12px;background:#e3ecf9"></div>
<div class="r" style="left:93px;top:636px;width:159px;height:12px;background:#fafafa"></div>
<div class="r" style="left:96px;top:648px;width:12px;height:12px;background:#f4f8fe"></div>
<div class="r" style="left:108px;top:648px;width:12px;height:12px;background:#e2ecf9"></div>
<div class="r" style="left:120px;top:648px;width:12px;height:12px;background:#eef3fc"></div>
<div class="r" style="left:132px;top:648px;width:12px;height:12px;background:#e6edfa"></div>
<div class="r" style="left:144px;top:648px;width:12px;height:12px;background:#ebf2fc"></div>
<div class="r" style="left:156px;top:648px;width:12px;height:12px;background:#e4ebf8"></div>
<div class="r" style="left:168px;top:648px;width:12px;height:12px;background:#eaf0fb"></div>
<div class="r" style="left:180px;top:648px;width:12px;height:12px;background:#edf2fc"></div>
<div class="r" style="left:192px;top:648px;width:12px;height:12px;background:#edf2fc"></div>
<div class="r" style="left:204px;top:648px;width:12px;height:12px;background:#edf2fc"></div>
<div class="r" style="left:216px;top:648px;width:12px;height:12px;background:#e6edfa"></div>
<div class="r" style="left:228px;top:648px;width:12px;height:12px;background:#e8eefa"></div>
<div class="r" style="left:96px;top:660px;width:12px;height:12px;background:#eef4fb"></div>
<div class="r" style="left:108px;top:660px;width:12px;height:12px;background:#d6e4f6"></div>
<div class="r" style="left:120px;top:660px;width:12px;height:12px;background:#cbdcf4"></div>
<div class="r" style="left:132px;top:660px;width:12px;height:12px;background:#d8e5f6"></div>
<div class="r" style="left:144px;top:660px;width:12px;height:12px;background:#e3ecf9"></div>
<div class="r" style="left:156px;top:660px;width:12px;height:12px;background:#cfdff5"></div>
<div class="r" style="left:168px;top:660px;width:12px;height:12px;background:#d5e2f5"></div>
<div class="r" style="left:180px;top:660px;width:12px;height:12px;background:#d5e2f5"></div>
<div class="r" style="left:192px;top:660px;width:12px;height:12px;background:#d0e0f5"></div>
<div class="r" style="left:204px;top:660px;width:12px;height:12px;background:#e3ecf9"></div>
<div class="r" style="left:216px;top:660px;width:12px;height:12px;background:#e3ecf9"></div>
<div class="r" style="left:228px;top:660px;width:12px;height:12px;background:#eef3fc"></div>
<div class="r" style="left:92px;top:684px;width:165px;height:5px;background:#e9eaea"></div>
<div class="t" style="left:272.2px;top:271.58px;font-size:16.5px;color:#53575d;letter-spacing:0.3px;transform:scaleX(0.885);transform-origin:0 0">6,944,856</div>
<div class="t" style="left:469.75px;top:271.58px;font-size:16.5px;color:#53575d;letter-spacing:0.3px;transform:scaleX(0.885);transform-origin:0 0">58,040,136</div>
<div class="t" style="left:635.2px;top:271.58px;font-size:16.5px;color:#53575d;letter-spacing:0.3px;transform:scaleX(0.885);transform-origin:0 0">8.36</div>
<div class="t" style="left:848.3px;top:271.58px;font-size:16.5px;color:#53575d;letter-spacing:0.3px;transform:scaleX(0.885);transform-origin:0 0">$412,392.95</div>
<div class="t" style="left:1011.5px;top:271.58px;font-size:16.5px;color:#53575d;letter-spacing:0.3px;transform:scaleX(0.885);transform-origin:0 0"><span style="display:inline-block;border-bottom:1px dotted #65676b;height:14.9px">4,867</span><span style="font-size:10.5px;color:#65676b;margin-left:11px;position:relative;top:-0.8px">[2]</span></div>
<div class="t" style="left:1167.8px;top:271.58px;font-size:16.5px;color:#53575d;letter-spacing:0.3px;transform:scaleX(0.885);transform-origin:0 0"><span style="display:inline-block;border-bottom:1px dotted #65676b;height:14.9px">$84.73</span><span style="font-size:10.5px;color:#65676b;margin-left:11px;position:relative;top:-0.8px">[2]</span></div>
<div class="t" style="left:1314px;top:271.58px;font-size:16.5px;color:#53575d;letter-spacing:0.3px;transform:scaleX(0.885);transform-origin:0 0">459,055</div>
<div class="t" style="left:272.2px;top:319.38px;font-size:16.5px;color:#53575d;letter-spacing:0.3px;transform:scaleX(0.885);transform-origin:0 0">6,526,886</div>
<div class="t" style="left:469.75px;top:319.38px;font-size:16.5px;color:#53575d;letter-spacing:0.3px;transform:scaleX(0.885);transform-origin:0 0">41,143,339</div>
<div class="t" style="left:635.2px;top:319.38px;font-size:16.5px;color:#53575d;letter-spacing:0.3px;transform:scaleX(0.885);transform-origin:0 0">6.30</div>
<div class="t" style="left:848.3px;top:319.38px;font-size:16.5px;color:#53575d;letter-spacing:0.3px;transform:scaleX(0.885);transform-origin:0 0">$296,923.09</div>
<div class="t" style="left:1011.5px;top:319.38px;font-size:16.5px;color:#53575d;letter-spacing:0.3px;transform:scaleX(0.885);transform-origin:0 0"><span style="display:inline-block;border-bottom:1px dotted #65676b;height:14.9px">4,489</span><span style="font-size:10.5px;color:#65676b;margin-left:11px;position:relative;top:-0.8px">[2]</span></div>
<div class="t" style="left:1167.8px;top:319.38px;font-size:16.5px;color:#53575d;letter-spacing:0.3px;transform:scaleX(0.885);transform-origin:0 0"><span style="display:inline-block;border-bottom:1px dotted #65676b;height:14.9px">$66.14</span><span style="font-size:10.5px;color:#65676b;margin-left:11px;position:relative;top:-0.8px">[2]</span></div>
<div class="t" style="left:1314px;top:319.38px;font-size:16.5px;color:#53575d;letter-spacing:0.3px;transform:scaleX(0.885);transform-origin:0 0">317,602</div>
<div class="t" style="left:272.2px;top:367.18px;font-size:16.5px;color:#53575d;letter-spacing:0.3px;transform:scaleX(0.885);transform-origin:0 0">1,563,475</div>
<div class="t" style="left:469.75px;top:367.18px;font-size:16.5px;color:#53575d;letter-spacing:0.3px;transform:scaleX(0.885);transform-origin:0 0">9,006,756</div>
<div class="t" style="left:635.2px;top:367.18px;font-size:16.5px;color:#53575d;letter-spacing:0.3px;transform:scaleX(0.885);transform-origin:0 0">5.76</div>
<div class="t" style="left:848.3px;top:367.18px;font-size:16.5px;color:#53575d;letter-spacing:0.3px;transform:scaleX(0.885);transform-origin:0 0">$57,221.10</div>
<div class="t" style="left:1011.5px;top:367.18px;font-size:16.5px;color:#53575d;letter-spacing:0.3px;transform:scaleX(0.885);transform-origin:0 0"><span style="display:inline-block;border-bottom:1px dotted #65676b;height:14.9px">750</span><span style="font-size:10.5px;color:#65676b;margin-left:11px;position:relative;top:-0.8px">[2]</span></div>
<div class="t" style="left:1167.8px;top:367.18px;font-size:16.5px;color:#53575d;letter-spacing:0.3px;transform:scaleX(0.885);transform-origin:0 0"><span style="display:inline-block;border-bottom:1px dotted #65676b;height:14.9px">$76.29</span><span style="font-size:10.5px;color:#65676b;margin-left:11px;position:relative;top:-0.8px">[2]</span></div>
<div class="t" style="left:1314px;top:367.18px;font-size:16.5px;color:#53575d;letter-spacing:0.3px;transform:scaleX(0.885);transform-origin:0 0">47,776</div>
<div class="t" style="left:272.2px;top:414.98px;font-size:16.5px;color:#53575d;letter-spacing:0.3px;transform:scaleX(0.885);transform-origin:0 0">692,025</div>
<div class="t" style="left:469.75px;top:414.98px;font-size:16.5px;color:#53575d;letter-spacing:0.3px;transform:scaleX(0.885);transform-origin:0 0">2,878,431</div>
<div class="t" style="left:635.2px;top:414.98px;font-size:16.5px;color:#53575d;letter-spacing:0.3px;transform:scaleX(0.885);transform-origin:0 0">4.16</div>
<div class="t" style="left:848.3px;top:414.98px;font-size:16.5px;color:#53575d;letter-spacing:0.3px;transform:scaleX(0.885);transform-origin:0 0">$15,142.11</div>
<div class="t" style="left:1011.5px;top:414.98px;font-size:16.5px;color:#53575d;letter-spacing:0.3px;transform:scaleX(0.885);transform-origin:0 0"><span style="display:inline-block;border-bottom:1px dotted #65676b;height:14.9px">79</span><span style="font-size:10.5px;color:#65676b;margin-left:11px;position:relative;top:-0.8px">[2]</span></div>
<div class="t" style="left:1167.8px;top:414.98px;font-size:16.5px;color:#53575d;letter-spacing:0.3px;transform:scaleX(0.885);transform-origin:0 0"><span style="display:inline-block;border-bottom:1px dotted #65676b;height:14.9px">$191.67</span><span style="font-size:10.5px;color:#65676b;margin-left:11px;position:relative;top:-0.8px">[2]</span></div>
<div class="t" style="left:1314px;top:414.98px;font-size:16.5px;color:#53575d;letter-spacing:0.3px;transform:scaleX(0.885);transform-origin:0 0">27,704</div>
<div class="t" style="left:272.2px;top:462.78px;font-size:16.5px;color:#53575d;letter-spacing:0.3px;transform:scaleX(0.885);transform-origin:0 0">1,068,096</div>
<div class="t" style="left:469.75px;top:462.78px;font-size:16.5px;color:#53575d;letter-spacing:0.3px;transform:scaleX(0.885);transform-origin:0 0">2,173,837</div>
<div class="t" style="left:635.2px;top:462.78px;font-size:16.5px;color:#53575d;letter-spacing:0.3px;transform:scaleX(0.885);transform-origin:0 0">2.04</div>
<div class="t" style="left:848.3px;top:462.78px;font-size:16.5px;color:#53575d;letter-spacing:0.3px;transform:scaleX(0.885);transform-origin:0 0">$13,133.24</div>
<div class="t" style="left:1011.5px;top:462.78px;font-size:16.5px;color:#53575d;letter-spacing:0.3px;transform:scaleX(0.885);transform-origin:0 0"><span style="display:inline-block;border-bottom:1px dotted #65676b;height:14.9px">167</span><span style="font-size:10.5px;color:#65676b;margin-left:11px;position:relative;top:-0.8px">[2]</span></div>
<div class="t" style="left:1167.8px;top:462.78px;font-size:16.5px;color:#53575d;letter-spacing:0.3px;transform:scaleX(0.885);transform-origin:0 0"><span style="display:inline-block;border-bottom:1px dotted #65676b;height:14.9px">$78.64</span><span style="font-size:10.5px;color:#65676b;margin-left:11px;position:relative;top:-0.8px">[2]</span></div>
<div class="t" style="left:1314px;top:462.78px;font-size:16.5px;color:#53575d;letter-spacing:0.3px;transform:scaleX(0.885);transform-origin:0 0">14,666</div>
<div class="t" style="left:272.2px;top:510.57px;font-size:16.5px;color:#53575d;letter-spacing:0.3px;transform:scaleX(0.885);transform-origin:0 0">135,998</div>
<div class="t" style="left:469.75px;top:510.57px;font-size:16.5px;color:#53575d;letter-spacing:0.3px;transform:scaleX(0.885);transform-origin:0 0">206,007</div>
<div class="t" style="left:635.2px;top:510.57px;font-size:16.5px;color:#53575d;letter-spacing:0.3px;transform:scaleX(0.885);transform-origin:0 0">1.51</div>
<div class="t" style="left:848.3px;top:510.57px;font-size:16.5px;color:#53575d;letter-spacing:0.3px;transform:scaleX(0.885);transform-origin:0 0">$3,784.69</div>
<div class="t" style="left:1011.5px;top:510.57px;font-size:16.5px;color:#53575d;letter-spacing:0.3px;transform:scaleX(0.885);transform-origin:0 0"><span style="display:inline-block;border-bottom:1px dotted #65676b;height:14.9px">6</span><span style="font-size:10.5px;color:#65676b;margin-left:11px;position:relative;top:-0.8px">[2]</span></div>
<div class="t" style="left:1167.8px;top:510.57px;font-size:16.5px;color:#53575d;letter-spacing:0.3px;transform:scaleX(0.885);transform-origin:0 0"><span style="display:inline-block;border-bottom:1px dotted #65676b;height:14.9px">$630.78</span><span style="font-size:10.5px;color:#65676b;margin-left:11px;position:relative;top:-0.8px">[2]</span></div>
<div class="t" style="left:1314px;top:510.57px;font-size:16.5px;color:#53575d;letter-spacing:0.3px;transform:scaleX(0.885);transform-origin:0 0">1,678</div>
<div class="t" style="left:272.2px;top:558.37px;font-size:16.5px;color:#53575d;letter-spacing:0.3px;transform:scaleX(0.885);transform-origin:0 0">31,676</div>
<div class="t" style="left:469.75px;top:558.37px;font-size:16.5px;color:#53575d;letter-spacing:0.3px;transform:scaleX(0.885);transform-origin:0 0">47,097</div>
<div class="t" style="left:635.2px;top:558.37px;font-size:16.5px;color:#53575d;letter-spacing:0.3px;transform:scaleX(0.885);transform-origin:0 0">1.49</div>
<div class="t" style="left:848.3px;top:558.37px;font-size:16.5px;color:#53575d;letter-spacing:0.3px;transform:scaleX(0.885);transform-origin:0 0">$1,259.70</div>
<div class="t" style="left:1011.5px;top:558.37px;font-size:16.5px;color:#53575d;letter-spacing:0.3px;transform:scaleX(0.885);transform-origin:0 0"><span style="display:inline-block;border-bottom:1px dotted #65676b;height:14.9px">6</span><span style="font-size:10.5px;color:#65676b;margin-left:11px;position:relative;top:-0.8px">[2]</span></div>
<div class="t" style="left:1167.8px;top:558.37px;font-size:16.5px;color:#53575d;letter-spacing:0.3px;transform:scaleX(0.885);transform-origin:0 0"><span style="display:inline-block;border-bottom:1px dotted #65676b;height:14.9px">$209.95</span><span style="font-size:10.5px;color:#65676b;margin-left:11px;position:relative;top:-0.8px">[2]</span></div>
<div class="t" style="left:1314px;top:558.37px;font-size:16.5px;color:#53575d;letter-spacing:0.3px;transform:scaleX(0.885);transform-origin:0 0">562</div>
<div class="t" style="left:272.2px;top:606.17px;font-size:16.5px;color:#53575d;letter-spacing:0.3px;transform:scaleX(0.885);transform-origin:0 0">76,683</div>
<div class="t" style="left:469.75px;top:606.17px;font-size:16.5px;color:#53575d;letter-spacing:0.3px;transform:scaleX(0.885);transform-origin:0 0">138,003</div>
<div class="t" style="left:635.2px;top:606.17px;font-size:16.5px;color:#53575d;letter-spacing:0.3px;transform:scaleX(0.885);transform-origin:0 0">1.80</div>
<div class="t" style="left:848.3px;top:606.17px;font-size:16.5px;color:#53575d;letter-spacing:0.3px;transform:scaleX(0.885);transform-origin:0 0">$1,123.90</div>
<div class="t" style="left:1011.5px;top:606.17px;font-size:16.5px;color:#53575d;letter-spacing:0.3px;transform:scaleX(0.885);transform-origin:0 0"><span style="display:inline-block;border-bottom:1px dotted #65676b;height:14.9px">8</span><span style="font-size:10.5px;color:#65676b;margin-left:11px;position:relative;top:-0.8px">[2]</span></div>
<div class="t" style="left:1167.8px;top:606.17px;font-size:16.5px;color:#53575d;letter-spacing:0.3px;transform:scaleX(0.885);transform-origin:0 0"><span style="display:inline-block;border-bottom:1px dotted #65676b;height:14.9px">$140.49</span><span style="font-size:10.5px;color:#65676b;margin-left:11px;position:relative;top:-0.8px">[2]</span></div>
<div class="t" style="left:1314px;top:606.17px;font-size:16.5px;color:#53575d;letter-spacing:0.3px;transform:scaleX(0.885);transform-origin:0 0">1,517</div>
<div class="t" style="left:272.2px;top:653.97px;font-size:16.5px;color:#53575d;letter-spacing:0.3px;transform:scaleX(0.885);transform-origin:0 0">3,136</div>
<div class="t" style="left:469.75px;top:653.97px;font-size:16.5px;color:#53575d;letter-spacing:0.3px;transform:scaleX(0.885);transform-origin:0 0">3,284</div>
<div class="t" style="left:635.2px;top:653.97px;font-size:16.5px;color:#53575d;letter-spacing:0.3px;transform:scaleX(0.885);transform-origin:0 0">1.05</div>
<div class="t" style="left:848.3px;top:653.97px;font-size:16.5px;color:#53575d;letter-spacing:0.3px;transform:scaleX(0.885);transform-origin:0 0">$27.23</div>
<div class="r" style="left:1011.5px;top:661.2px;width:14px;height:1.8px;background:#6a6e75"></div>
<div class="r" style="left:1167.8px;top:661.2px;width:14px;height:1.8px;background:#6a6e75"></div>
<div class="t" style="left:1314px;top:653.97px;font-size:16.5px;color:#53575d;letter-spacing:0.3px;transform:scaleX(0.885);transform-origin:0 0">22</div>
<div class="t" style="left:105.50px;top:696.95px;font-size:15px;font-weight:700;color:#26292e;">Total results</div>
<div class="t" style="left:105.50px;top:718.59px;font-size:13.66px;font-weight:400;color:#8d9096;">9 / 9 rows displayed</div>
<div class="t" style="right:1475.80px;top:698.27px;font-size:15.8px;font-weight:700;color:#26292e;">10,015,827</div>
<div class="t" style="right:1475.80px;top:718.59px;font-size:13.66px;font-weight:400;color:#606770;">Accounts Center accounts</div>
<div class="t" style="right:1309.60px;top:698.27px;font-size:15.8px;font-weight:700;color:#26292e;">113,636,890</div>
<div class="t" style="right:1309.60px;top:718.59px;font-size:13.66px;font-weight:400;color:#606770;">Total</div>
<div class="t" style="right:1096.50px;top:698.27px;font-size:15.8px;font-weight:700;color:#26292e;">11.35</div>
<div class="t" style="right:1096.50px;top:718.59px;font-size:13.66px;font-weight:400;color:#606770;">Per Accounts Center account</div>
<div class="t" style="right:933.20px;top:698.27px;font-size:15.8px;font-weight:700;color:#26292e;">$801,008.01</div>
<div class="t" style="right:933.20px;top:718.59px;font-size:13.66px;font-weight:400;color:#606770;">Total spent</div>
<div class="t" style="right:776.70px;top:698.27px;font-size:15.8px;font-weight:700;color:#26292e"><span style="display:inline-block;border-bottom:1px dotted #65676b;height:15.200000000000001px">10,372</span><span style="font-size:10.5px;margin-left:9px;position:relative;top:-1.3px">[2]</span></div>
<div class="t" style="right:776.70px;top:718.59px;font-size:13.66px;font-weight:400;color:#606770;">Total</div>
<div class="t" style="right:630.00px;top:698.27px;font-size:15.8px;font-weight:700;color:#26292e"><span style="display:inline-block;border-bottom:1px dotted #65676b;height:15.200000000000001px">$77.23</span><span style="font-size:10.5px;margin-left:9px;position:relative;top:-1.3px">[2]</span></div>
<div class="t" style="right:630.00px;top:718.59px;font-size:13.66px;font-weight:400;color:#606770;">Per Action</div>
<div class="t" style="right:507.40px;top:698.27px;font-size:15.8px;font-weight:700;color:#26292e;">870,582</div>
<div class="t" style="right:507.40px;top:718.59px;font-size:13.66px;font-weight:400;color:#606770;">Total</div>
<div class="r" style="left:1847.5px;top:73px;width:120px;height:983px;background:#fff;border-radius:9px;box-shadow:0 0 0 1px rgba(0,0,0,0.035),0 1px 2px rgba(0,0,0,0.06)"></div>
<div class="t" style="left:1861.70px;top:93.98px;font-size:17.2px;font-weight:700;color:#1c2b33;">Customize columns</div>
<div class="r" style="left:1861px;top:132px;width:120px;height:41px;background:#fff;border:1px solid #d9dce0;border-radius:7px"></div>
<svg class="r" style="left:1873px;top:144px;" width="17" height="17" viewBox="0 0 17 17" fill="none"><circle cx="7" cy="7" r="5.5" stroke="#65676b" stroke-width="1.4"/><path d="M11 11l4.5 4.5" stroke="#65676b" stroke-width="1.6" stroke-linecap="round"/></svg>
<div class="t" style="left:1897.50px;top:146.54px;font-size:15.6px;font-weight:400;color:#8a8d91;">Search</div>
<div class="t" style="left:1875.30px;top:195.84px;font-size:15.6px;font-weight:400;color:#1c1e21;">Breakdowns</div>
<div class="t" style="left:1861.80px;top:253.84px;font-size:15.6px;font-weight:400;color:#4b4f56;">Popular metrics</div>
<div class="r" style="left:1861px;top:291.5px;width:27px;height:27px;background:#fff;border:1px solid #d5d8dc;border-radius:6px"></div>
<svg class="r" style="left:1866px;top:297.5px;" width="17" height="14" viewBox="0 0 17 14" fill="none"><path d="M2 7.2l4 4L15.2 2.5" stroke="#1c2b33" stroke-width="2.1" stroke-linecap="round" stroke-linejoin="round"/></svg>
<div class="t" style="left:1898.00px;top:297.24px;font-size:15.6px;font-weight:400;color:#3b3f45;">Amount spent</div>
<div class="r" style="left:1861px;top:327.85px;width:27px;height:27px;background:#fff;border:1px solid #d5d8dc;border-radius:6px"></div>
<svg class="r" style="left:1866px;top:333.85px;" width="17" height="14" viewBox="0 0 17 14" fill="none"><path d="M2 7.2l4 4L15.2 2.5" stroke="#1c2b33" stroke-width="2.1" stroke-linecap="round" stroke-linejoin="round"/></svg>
<div class="t" style="left:1898.00px;top:333.59px;font-size:15.6px;font-weight:400;color:#3b3f45;">Impressions</div>
<div class="r" style="left:1861px;top:364.2px;width:27px;height:27px;background:#fff;border:1px solid #d5d8dc;border-radius:6px"></div>
<svg class="r" style="left:1866px;top:370.2px;" width="17" height="14" viewBox="0 0 17 14" fill="none"><path d="M2 7.2l4 4L15.2 2.5" stroke="#1c2b33" stroke-width="2.1" stroke-linecap="round" stroke-linejoin="round"/></svg>
<div class="t" style="left:1898.00px;top:369.94px;font-size:15.6px;font-weight:400;color:#3b3f45;">Reach</div>
<div class="r" style="left:1861px;top:400.55px;width:27px;height:27px;background:#fff;border:1px solid #d5d8dc;border-radius:6px"></div>
<svg class="r" style="left:1866px;top:406.55px;" width="17" height="14" viewBox="0 0 17 14" fill="none"><path d="M2 7.2l4 4L15.2 2.5" stroke="#1c2b33" stroke-width="2.1" stroke-linecap="round" stroke-linejoin="round"/></svg>
<div class="t" style="left:1898.00px;top:406.29px;font-size:15.6px;font-weight:400;color:#3b3f45;">Frequency</div>
<div class="r" style="left:1861px;top:436.9px;width:27px;height:27px;background:#fff;border:1px solid #d5d8dc;border-radius:6px"></div>
<svg class="r" style="left:1866px;top:442.9px;" width="17" height="14" viewBox="0 0 17 14" fill="none"><path d="M2 7.2l4 4L15.2 2.5" stroke="#1c2b33" stroke-width="2.1" stroke-linecap="round" stroke-linejoin="round"/></svg>
<div class="t" style="left:1898.00px;top:442.64px;font-size:15.6px;font-weight:400;color:#3b3f45;">Purchases</div>
<div class="r" style="left:1861px;top:473.25px;width:27px;height:27px;background:#fff;border:1px solid #d5d8dc;border-radius:6px"></div>
<svg class="r" style="left:1866px;top:479.25px;" width="17" height="14" viewBox="0 0 17 14" fill="none"><path d="M2 7.2l4 4L15.2 2.5" stroke="#1c2b33" stroke-width="2.1" stroke-linecap="round" stroke-linejoin="round"/></svg>
<div class="t" style="left:1898.00px;top:478.99px;font-size:15.6px;font-weight:400;color:#3b3f45;">Cost per purchase</div>
<div class="r" style="left:1861px;top:509.6px;width:27px;height:27px;background:#fff;border:1px solid #d5d8dc;border-radius:6px"></div>
<div class="t" style="left:1898.00px;top:515.34px;font-size:15.6px;font-weight:400;color:#3b3f45;">Purchase ROAS</div>
<div class="r" style="left:1861px;top:545.95px;width:27px;height:27px;background:#fff;border:1px solid #d5d8dc;border-radius:6px"></div>
<div class="t" style="left:1898.00px;top:551.69px;font-size:15.6px;font-weight:400;color:#3b3f45;">Link clicks</div>
<div class="r" style="left:1861px;top:582.3px;width:27px;height:27px;background:#fff;border:1px solid #d5d8dc;border-radius:6px"></div>
<div class="t" style="left:1898.00px;top:588.04px;font-size:15.6px;font-weight:400;color:#3b3f45;">CPC</div>
<div class="r" style="left:1861px;top:618.6500000000001px;width:27px;height:27px;background:#fff;border:1px solid #d5d8dc;border-radius:6px"></div>
<svg class="r" style="left:1866px;top:624.6500000000001px;" width="17" height="14" viewBox="0 0 17 14" fill="none"><path d="M2 7.2l4 4L15.2 2.5" stroke="#1c2b33" stroke-width="2.1" stroke-linecap="round" stroke-linejoin="round"/></svg>
<div class="t" style="left:1898.00px;top:624.39px;font-size:15.6px;font-weight:400;color:#3b3f45;">Clicks (all)</div>
<div class="r" style="left:1861px;top:655.0px;width:27px;height:27px;background:#fff;border:1px solid #d5d8dc;border-radius:6px"></div>
<div class="t" style="left:1898.00px;top:660.74px;font-size:15.6px;font-weight:400;color:#3b3f45;">CPC (all)</div>
<div class="r" style="left:1861px;top:691.35px;width:27px;height:27px;background:#fff;border:1px solid #d5d8dc;border-radius:6px"></div>
<div class="t" style="left:1898.00px;top:697.09px;font-size:15.6px;font-weight:400;color:#3b3f45;">CPM</div>
<div class="r" style="left:1861px;top:727.7px;width:27px;height:27px;background:#fff;border:1px solid #d5d8dc;border-radius:6px"></div>
<div class="t" style="left:1898.00px;top:733.44px;font-size:15.6px;font-weight:400;color:#3b3f45;">CTR</div>
<div class="t" style="left:1861.80px;top:775.54px;font-size:15.6px;font-weight:400;color:#4b4f56;">Custom metrics</div>
<div class="r" style="left:1861px;top:809px;width:120px;height:40px;background:#f1f1f1;border-radius:7px"></div>
<div class="t" style="left:1861.80px;top:867.24px;font-size:15.6px;font-weight:400;color:#4b4f56;">Performance</div>
<div class="r" style="left:1861px;top:904.5px;width:27px;height:27px;background:#fff;border:1px solid #d5d8dc;border-radius:6px"></div>
<svg class="r" style="left:1866px;top:910.5px;" width="17" height="14" viewBox="0 0 17 14" fill="none"><path d="M2 7.2l4 4L15.2 2.5" stroke="#1c2b33" stroke-width="2.1" stroke-linecap="round" stroke-linejoin="round"/></svg>
<div class="t" style="left:1898.00px;top:910.24px;font-size:15.6px;font-weight:400;color:#3b3f45;">Reach</div>
<div class="r" style="left:1861px;top:940.85px;width:27px;height:27px;background:#fff;border:1px solid #d5d8dc;border-radius:6px"></div>
<svg class="r" style="left:1866px;top:946.85px;" width="17" height="14" viewBox="0 0 17 14" fill="none"><path d="M2 7.2l4 4L15.2 2.5" stroke="#1c2b33" stroke-width="2.1" stroke-linecap="round" stroke-linejoin="round"/></svg>
<div class="t" style="left:1898.00px;top:946.59px;font-size:15.6px;font-weight:400;color:#3b3f45;">Frequency</div>
<div class="r" style="left:1861px;top:977.2px;width:27px;height:27px;background:#fff;border:1px solid #d5d8dc;border-radius:6px"></div>
<svg class="r" style="left:1866px;top:983.2px;" width="17" height="14" viewBox="0 0 17 14" fill="none"><path d="M2 7.2l4 4L15.2 2.5" stroke="#1c2b33" stroke-width="2.1" stroke-linecap="round" stroke-linejoin="round"/></svg>
<div class="t" style="left:1898.00px;top:982.94px;font-size:15.6px;font-weight:400;color:#3b3f45;">Impressions</div>
<div class="r" style="left:1861px;top:1013.55px;width:27px;height:27px;background:#fff;border:1px solid #d5d8dc;border-radius:6px"></div>
<svg class="r" style="left:1866px;top:1019.55px;" width="17" height="14" viewBox="0 0 17 14" fill="none"><path d="M2 7.2l4 4L15.2 2.5" stroke="#1c2b33" stroke-width="2.1" stroke-linecap="round" stroke-linejoin="round"/></svg>
<div class="t" style="left:1898.00px;top:1019.29px;font-size:15.6px;font-weight:400;color:#3b3f45;">Amount spent</div>
</body></html>
